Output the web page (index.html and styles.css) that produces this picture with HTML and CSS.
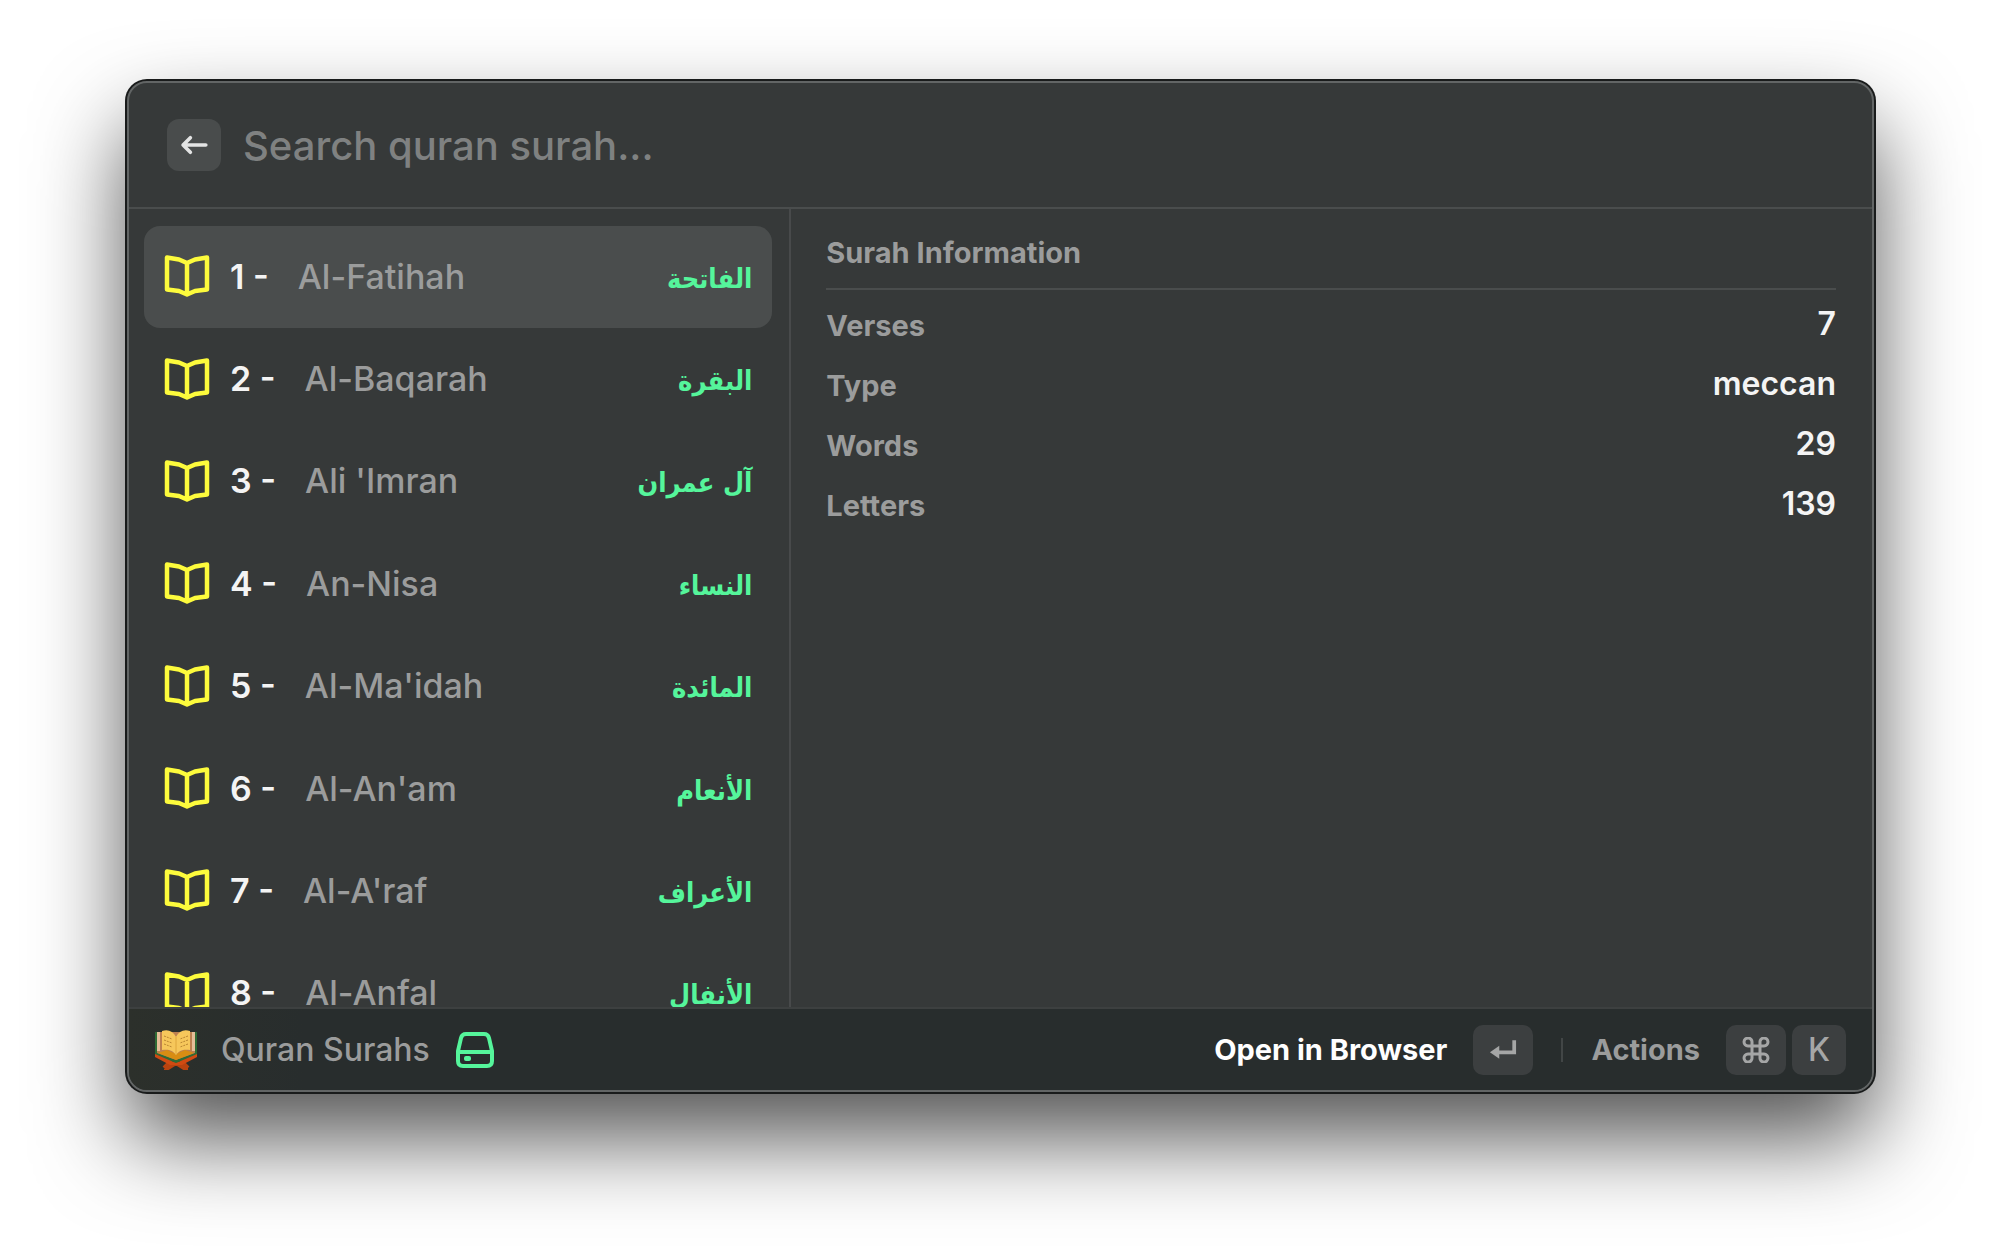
FILE: index.html
```html
<!DOCTYPE html>
<html lang="en">
<head>
<meta charset="utf-8">
<meta name="viewport" content="width=device-width, initial-scale=1">
<title>Quran Surahs</title>
<link rel="stylesheet" href="styles.css">
</head>
<body>
<svg class="sprite" aria-hidden="true">
  <symbol id="book" viewBox="0 0 46 42">
    <path d="M23 8L15 4.500 3 2.500v32l12 1.500 8 3.500 8-3.500 12-1.500v-32L31 4.500zM23 8v31" fill="none" stroke="currentColor" stroke-width="4.500" stroke-linejoin="round"/>
  </symbol>
</svg>
<main class="window">
  <header class="search">
    <button class="back" type="button" aria-label="Back">
      <svg width="28" height="20" viewBox="0 0 30 22"><path d="M28 11H3M11 3L3 11l8 8" fill="none" stroke="currentColor" stroke-width="4" stroke-linecap="round" stroke-linejoin="round"/></svg>
    </button>
    <input class="field" type="text" placeholder="Search quran surah..." aria-label="Search quran surah">
  </header>
  <div class="content">
    <section class="pane">
      <ul class="list">
        <li><button class="row selected" type="button"><svg class="book"><use href="#book"/></svg><span class="num">1 -</span><span class="name">Al-Fatihah</span><span class="arabic" lang="ar" dir="rtl">الفاتحة</span></button></li>
        <li><button class="row" type="button"><svg class="book"><use href="#book"/></svg><span class="num">2 -</span><span class="name">Al-Baqarah</span><span class="arabic" lang="ar" dir="rtl">البقرة</span></button></li>
        <li><button class="row" type="button"><svg class="book"><use href="#book"/></svg><span class="num">3 -</span><span class="name">Ali 'Imran</span><span class="arabic" lang="ar" dir="rtl">آل عمران</span></button></li>
        <li><button class="row" type="button"><svg class="book"><use href="#book"/></svg><span class="num">4 -</span><span class="name">An-Nisa</span><span class="arabic" lang="ar" dir="rtl">النساء</span></button></li>
        <li><button class="row" type="button"><svg class="book"><use href="#book"/></svg><span class="num">5 -</span><span class="name">Al-Ma'idah</span><span class="arabic" lang="ar" dir="rtl">المائدة</span></button></li>
        <li><button class="row" type="button"><svg class="book"><use href="#book"/></svg><span class="num">6 -</span><span class="name">Al-An'am</span><span class="arabic" lang="ar" dir="rtl">الأنعام</span></button></li>
        <li><button class="row" type="button"><svg class="book"><use href="#book"/></svg><span class="num">7 -</span><span class="name">Al-A'raf</span><span class="arabic" lang="ar" dir="rtl">الأعراف</span></button></li>
        <li><button class="row" type="button"><svg class="book"><use href="#book"/></svg><span class="num">8 -</span><span class="name">Al-Anfal</span><span class="arabic" lang="ar" dir="rtl">الأنفال</span></button></li>
      </ul>
    </section>
    <section class="detail">
      <h2 class="title">Surah Information</h2>
      <dl class="facts">
        <div class="fact"><dt>Verses</dt><dd>7</dd></div>
        <div class="fact"><dt>Type</dt><dd>meccan</dd></div>
        <div class="fact"><dt>Words</dt><dd>29</dd></div>
        <div class="fact"><dt>Letters</dt><dd>139</dd></div>
      </dl>
    </section>
  </div>
  <footer class="bar">
    <svg class="logo" viewBox="0 0 42 40" aria-hidden="true">
      <path d="M9 38l6-6-9-6M33 38l-6-6 9-6M9 38h4l8-5 8 5h4" fill="none" stroke="#b9430f" stroke-width="4" stroke-linejoin="round"/>
      <path d="M0 23l21 10 21-10v4L27 35H15L0 27z" fill="#d04a12"/>
      <path d="M0 2h4v21l17 7 17-7V2h4v22L21 33 0 24z" fill="#2f6b35"/>
      <path d="M2 2h38v21l-19 7-19-7z" fill="#bd8050"/>
      <path d="M2 2h3v19H2zM37 2h3v19h-3z" fill="#e5bd98"/>
      <path d="M3 23l9-3 9 4 9-4 9 3-18 7z" fill="#d88d13"/>
      <path d="M7 1c6-2 11 0 14 6 3-6 8-8 14-6v19c-6-1-11 0-14 5-3-5-8-6-14-5z" fill="#f6c75b"/>
      <path d="M9 6l8 3M9 10l8 3M9 14l8 3M33 6l-8 3M33 10l-8 3M33 14l-8 3" stroke="#b98532" stroke-width="1" stroke-dasharray="2 1"/>
      <path d="M21 7v18" stroke="#dea63c" stroke-width="1"/>
    </svg>
    <span class="app">Quran Surahs</span>
    <svg class="drive" viewBox="0 0 38 36" aria-hidden="true">
      <path d="M10 2h18q4 0 5 4l3 13v10q0 5-5 5H7q-5 0-5-5V19L5 6q1-4 5-4zM2 20h34" fill="none" stroke="currentColor" stroke-width="4" stroke-linejoin="round"/>
      <rect x="8" y="24" width="7" height="5" rx="2" fill="currentColor"/>
    </svg>
    <button class="action primary" type="button">Open in Browser
      <kbd class="key"><svg width="28" height="21" viewBox="0 0 30 22"><path d="M27 1v13H8" fill="none" stroke="currentColor" stroke-width="4"/><path d="M1 14l10-7v14z" fill="currentColor"/></svg></kbd>
    </button>
    <span class="divider"></span>
    <button class="action" type="button">Actions
      <span class="keys"><kbd class="key"><svg width="28" height="26" viewBox="0 0 28 26"><path d="M10 9V5.500A4 4 0 1 0 6 9h16a4 4 0 1 0-4-3.500V20.500A4 4 0 1 0 22 17H6a4 4 0 1 0 4 3.500z" fill="none" stroke="currentColor" stroke-width="3"/></svg></kbd><kbd class="key letter">K</kbd></span>
    </button>
  </footer>
</main>
</body>
</html>
```
FILE: styles.css
```css
* { box-sizing: border-box; }

body {
  margin: 0;
  height: 100vh;
  padding: 81px 126px 158px 127px;
  background: #fff;
  font-family: Inter, "DejaVu Sans", sans-serif;
  font-optical-sizing: none;
  font-weight: 500;
  color: #9b9c9c;
  overflow: hidden;
}

button { font: inherit; color: inherit; background: none; border: 0; padding: 0; }

.sprite { display: none; }

.window {
  height: 100%;
  display: flex;
  flex-direction: column;
  border: 2px solid #626565;
  border-radius: 20px;
  background: #363939;
  box-shadow: 0 0 0 2px #191b1b, 0 46px 90px rgba(0, 0, 0, .68);
}

.search {
  display: flex;
  align-items: center;
  gap: 22px;
  height: 126px;
  padding: 0 38px;
  border-bottom: 2px solid #4a4d4d;
}

.back {
  display: flex;
  align-items: center;
  justify-content: center;
  width: 54px;
  height: 52px;
  border-radius: 12px;
  background: #494c4c;
  color: #e3e4e4;
}

.field {
  flex: 1;
  min-width: 0;
  padding: 0;
  border: 0;
  outline: 0;
  background: none;
  color: #fff;
  font: inherit;
  font-size: 40px;
}

.field::placeholder { color: #7f8181; opacity: 1; }

.content {
  flex: 1;
  min-height: 0;
  display: flex;
}

.pane {
  flex: 0 0 38%;
  padding: 17px 17px 0 15px;
  border-right: 2px solid #484a4b;
  overflow: hidden;
}

.list {
  display: grid;
  grid-template-rows: repeat(8, 1fr);
  height: 819px;
  margin: 0;
  padding: 0;
  list-style: none;
}

.row {
  display: flex;
  align-items: center;
  width: 100%;
  height: 100%;
  padding: 0 20px 2px;
  border-radius: 16px;
  font-size: 34px;
}

.selected { background: #4a4d4d; }

.book {
  width: 46px;
  height: 42px;
  margin-right: 20px;
  color: #fdfb3c;
}

.num { margin-right: 29px; font-weight: 600; color: #f4f4f4; }

.arabic {
  margin-left: auto;
  padding-top: 4px;
  font-family: "DejaVu Sans Condensed", "DejaVu Sans", sans-serif;
  font-size: 27px;
  font-weight: 700;
  color: #55f59b;
}

.detail {
  flex: 1;
  min-width: 0;
  padding: 24px 36px 0 35px;
}

.title {
  margin: 0;
  padding-bottom: 15px;
  border-bottom: 2px solid #4a4d4d;
  font-size: 29px;
  line-height: 40px;
  font-weight: 700;
}

.facts { margin: 5px 0 0; }

.fact {
  display: flex;
  align-items: center;
  justify-content: space-between;
  height: 60px;
}

.fact dt { font-size: 29px; font-weight: 700; }

.fact dd { margin: 0; padding-bottom: 4px; font-size: 32px; font-weight: 600; color: #f4f4f4; }

.bar {
  display: flex;
  align-items: center;
  height: 83px;
  padding: 0 26px;
  border-top: 2px solid #3d4040;
  border-radius: 0 0 18px 18px;
  background: linear-gradient(90deg, #2c302b, #282d2d 10%);
}

.logo { width: 42px; height: 40px; margin-right: 24px; }

.app { margin-right: 26px; font-size: 32px; }

.drive { width: 38px; height: 36px; margin-right: auto; color: #55f59b; }

.action {
  display: flex;
  align-items: center;
  gap: 26px;
  font-size: 29px;
  font-weight: 700;
}

.primary { color: #fff; }

.divider {
  width: 2px;
  height: 24px;
  margin: 0 28px;
  background: #424646;
}

.keys { display: flex; gap: 6px; }

.key {
  display: flex;
  align-items: center;
  justify-content: center;
  width: 60px;
  height: 50px;
  border-radius: 10px;
  background: #3c3f40;
  color: #a5a6a6;
  font: inherit;
  font-size: 32px;
  font-weight: 500;
}

.letter { width: 54px; }
```
